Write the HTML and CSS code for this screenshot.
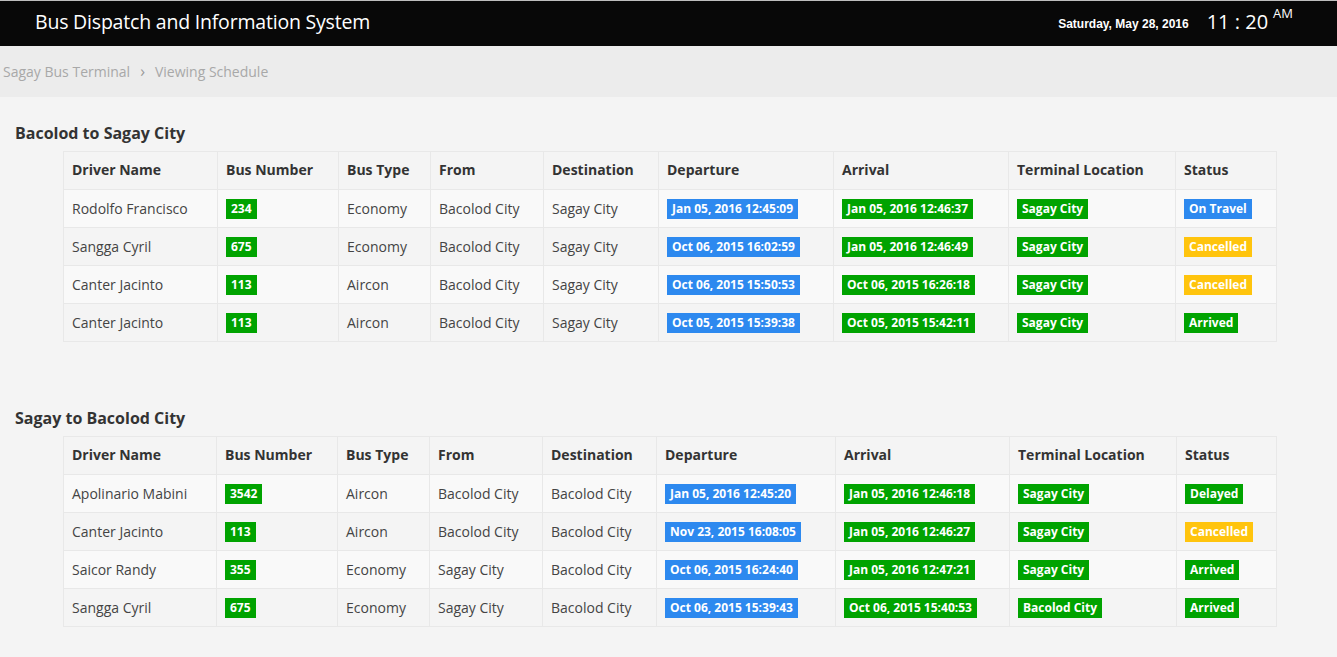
FILE: index.html
```html
<!DOCTYPE html>
<html>
<head>
<meta charset="utf-8">
<title>Bus Dispatch and Information System</title>
<link rel="stylesheet" href="styles.css">
</head>
<body>
<header class="topbar">
  <div class="brand">Bus Dispatch and Information System</div>
  <div class="clock">
    <span class="date">Saturday, May 28, 2016</span>
    <span class="time">11 : 20<sup class="ampm">AM</sup></span>
  </div>
</header>
<nav class="crumbs">
  <span>Sagay Bus Terminal</span>
  <span class="sep">&#8250;</span>
  <span>Viewing Schedule</span>
</nav>
<main class="content">
  <section class="route">
    <h2>Bacolod to Sagay City</h2>
    <table class="sched">
      <colgroup>
        <col style="width:154px"><col style="width:121px"><col style="width:92px"><col style="width:113px"><col style="width:115px"><col style="width:175px"><col style="width:175px"><col style="width:167px"><col>
      </colgroup>
      <thead>
        <tr><th>Driver Name</th><th>Bus Number</th><th>Bus Type</th><th>From</th><th>Destination</th><th>Departure</th><th>Arrival</th><th>Terminal Location</th><th>Status</th></tr>
      </thead>
      <tbody>
        <tr><td>Rodolfo Francisco</td><td><span class="lbl green">234</span></td><td>Economy</td><td>Bacolod City</td><td>Sagay City</td><td><span class="lbl blue">Jan 05, 2016 12:45:09</span></td><td><span class="lbl green">Jan 05, 2016 12:46:37</span></td><td><span class="lbl green">Sagay City</span></td><td><span class="lbl blue">On Travel</span></td></tr>
        <tr><td>Sangga Cyril</td><td><span class="lbl green">675</span></td><td>Economy</td><td>Bacolod City</td><td>Sagay City</td><td><span class="lbl blue">Oct 06, 2015 16:02:59</span></td><td><span class="lbl green">Jan 05, 2016 12:46:49</span></td><td><span class="lbl green">Sagay City</span></td><td><span class="lbl yellow">Cancelled</span></td></tr>
        <tr><td>Canter Jacinto</td><td><span class="lbl green">113</span></td><td>Aircon</td><td>Bacolod City</td><td>Sagay City</td><td><span class="lbl blue">Oct 06, 2015 15:50:53</span></td><td><span class="lbl green">Oct 06, 2015 16:26:18</span></td><td><span class="lbl green">Sagay City</span></td><td><span class="lbl yellow">Cancelled</span></td></tr>
        <tr><td>Canter Jacinto</td><td><span class="lbl green">113</span></td><td>Aircon</td><td>Bacolod City</td><td>Sagay City</td><td><span class="lbl blue">Oct 05, 2015 15:39:38</span></td><td><span class="lbl green">Oct 05, 2015 15:42:11</span></td><td><span class="lbl green">Sagay City</span></td><td><span class="lbl green">Arrived</span></td></tr>
      </tbody>
    </table>
  </section>
  <section class="route second">
    <h2>Sagay to Bacolod City</h2>
    <table class="sched">
      <colgroup>
        <col style="width:153px"><col style="width:121px"><col style="width:92px"><col style="width:113px"><col style="width:114px"><col style="width:179px"><col style="width:174px"><col style="width:167px"><col>
      </colgroup>
      <thead>
        <tr><th>Driver Name</th><th>Bus Number</th><th>Bus Type</th><th>From</th><th>Destination</th><th>Departure</th><th>Arrival</th><th>Terminal Location</th><th>Status</th></tr>
      </thead>
      <tbody>
        <tr><td>Apolinario Mabini</td><td><span class="lbl green">3542</span></td><td>Aircon</td><td>Bacolod City</td><td>Bacolod City</td><td><span class="lbl blue">Jan 05, 2016 12:45:20</span></td><td><span class="lbl green">Jan 05, 2016 12:46:18</span></td><td><span class="lbl green">Sagay City</span></td><td><span class="lbl green">Delayed</span></td></tr>
        <tr><td>Canter Jacinto</td><td><span class="lbl green">113</span></td><td>Aircon</td><td>Bacolod City</td><td>Bacolod City</td><td><span class="lbl blue">Nov 23, 2015 16:08:05</span></td><td><span class="lbl green">Jan 05, 2016 12:46:27</span></td><td><span class="lbl green">Sagay City</span></td><td><span class="lbl yellow">Cancelled</span></td></tr>
        <tr><td>Saicor Randy</td><td><span class="lbl green">355</span></td><td>Economy</td><td>Sagay City</td><td>Bacolod City</td><td><span class="lbl blue">Oct 06, 2015 16:24:40</span></td><td><span class="lbl green">Jan 05, 2016 12:47:21</span></td><td><span class="lbl green">Sagay City</span></td><td><span class="lbl green">Arrived</span></td></tr>
        <tr><td>Sangga Cyril</td><td><span class="lbl green">675</span></td><td>Economy</td><td>Sagay City</td><td>Bacolod City</td><td><span class="lbl blue">Oct 06, 2015 15:39:43</span></td><td><span class="lbl green">Oct 06, 2015 15:40:53</span></td><td><span class="lbl green">Bacolod City</span></td><td><span class="lbl green">Arrived</span></td></tr>
      </tbody>
    </table>
  </section>
</main>
</body>
</html>
```

FILE: styles.css
```css
* { box-sizing: border-box; }
html, body { margin: 0; padding: 0; }
body {
  background: #f4f4f4;
  font-family: "Open Sans", "Noto Sans", sans-serif;
  color: #333;
  width: 1337px;
  overflow: hidden;
}
.topbar {
  height: 46px;
  background: #080808;
  border-top: 1px solid #bdbdbd;
  display: flex;
  align-items: center;
  justify-content: space-between;
  padding: 0 44px 0 35px;
  color: #fff;
}
.brand {
  font-size: 19.5px;
  font-weight: 400;
  letter-spacing: -0.2px;
  margin-top: -4px;
}
.clock {
  display: flex;
  align-items: center;
  gap: 18px;
  margin-top: -4px;
}
.date {
  font-family: "Liberation Sans", Arial, sans-serif;
  font-weight: 700;
  font-size: 12px;
  margin-top: 5px;
}
.time {
  font-size: 20px;
  font-weight: 400;
  position: relative;
}
.ampm {
  font-size: 13px;
  position: relative;
  top: -3px;
  margin-left: 5px;
  vertical-align: super;
  line-height: 0;
}
.crumbs {
  height: 51px;
  background: #ececec;
  display: flex;
  align-items: center;
  padding: 0 0 0 3px;
  font-size: 14px;
  color: #a8a8a8;
  gap: 10px;
}
.crumbs .sep { font-size: 16px; color: #999; margin-top: -2px; }
.content { padding: 16px 0 30px 0; }
.route h2 {
  font-size: 16px;
  font-weight: 700;
  margin: 8px 0 6px 15px;
  line-height: 24px;
  color: #333;
}
.route.second { margin-top: 64px; }
.sched {
  margin-left: 63px;
  width: 1214px;
  border-collapse: collapse;
  table-layout: fixed;
  font-size: 14px;
}
.sched th, .sched td {
  border: 1px solid #e8e8e8;
  height: 38px;
  padding: 0 8px;
  text-align: left;
  vertical-align: middle;
  white-space: nowrap;
}
.sched th {
  font-weight: 700;
  background: #f4f4f4;
  color: #333;
  padding-bottom: 2px;
}
.sched tbody tr:nth-child(odd) td { background: #f9f9f9; }
.sched tbody tr:nth-child(even) td { background: #f4f4f4; }
.sched td { color: #444; padding-bottom: 1px; }
.lbl {
  display: inline-block;
  font-size: 12px;
  font-weight: 700;
  color: #fff;
  height: 20px;
  line-height: 20px;
  padding: 0 5px;
  vertical-align: middle;
}
.green { background: #00a300; }
.blue { background: #2d89ef; }
.yellow { background: #ffc40d; }
```
